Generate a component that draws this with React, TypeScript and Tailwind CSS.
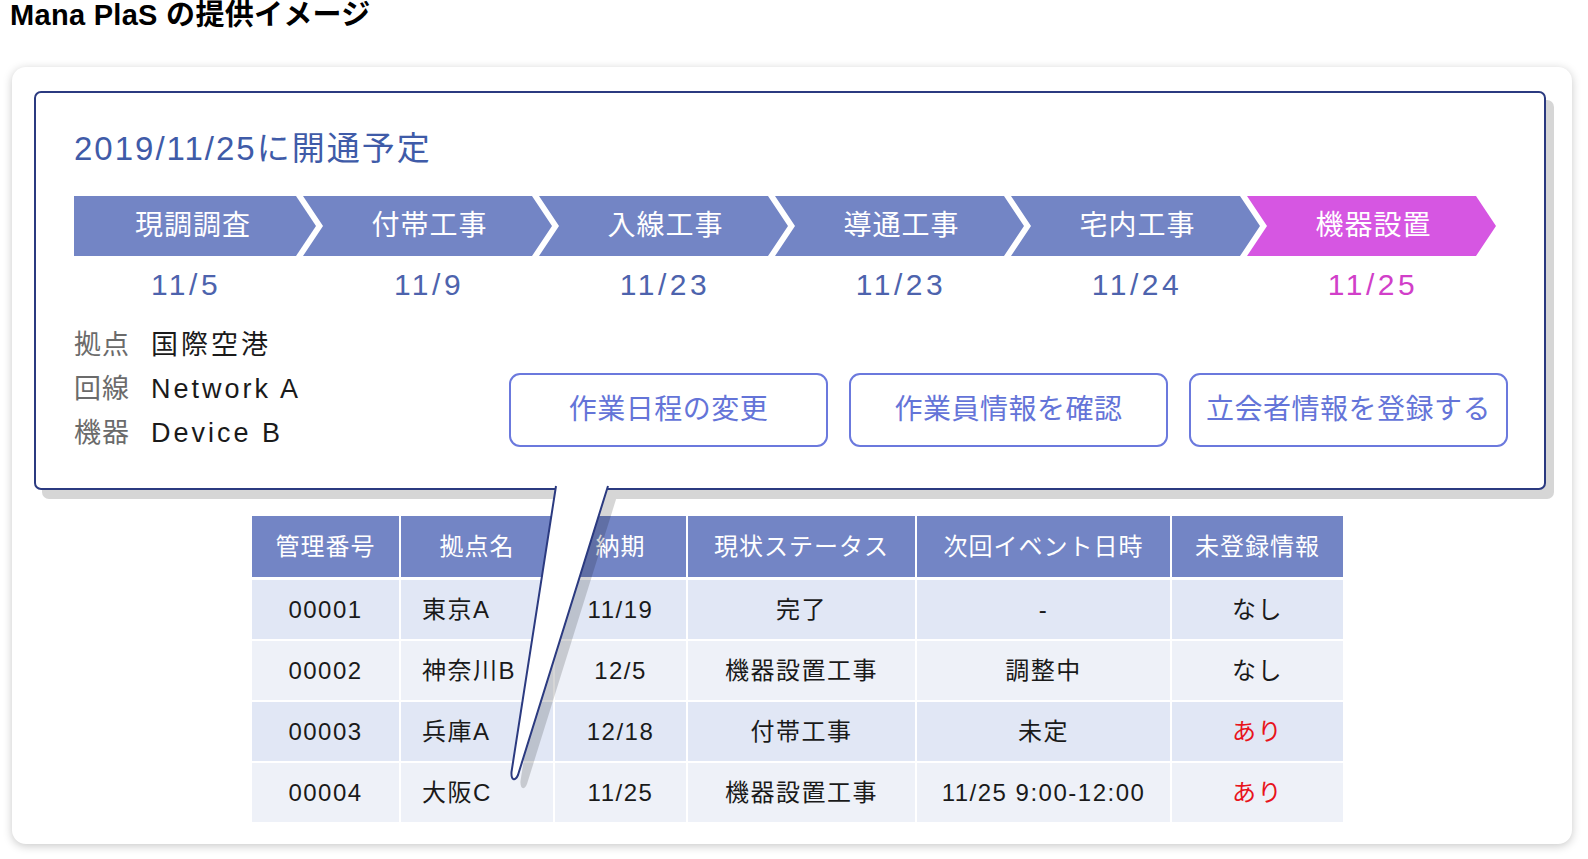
const steps = [
  { label: "現調調査", date: "11/5" },
  { label: "付帯工事", date: "11/9" },
  { label: "入線工事", date: "11/23" },
  { label: "導通工事", date: "11/23" },
  { label: "宅内工事", date: "11/24" },
  { label: "機器設置", date: "11/25", current: true },
];

const info = [
  ["拠点", "国際空港"],
  ["回線", "Network A"],
  ["機器", "Device B"],
];

const buttons = ["作業日程の変更", "作業員情報を確認", "立会者情報を登録する"];

const headers = ["管理番号", "拠点名", "納期", "現状ステータス", "次回イベント日時", "未登録情報"];

const rows = [
  ["00001", "東京A", "11/19", "完了", "-", "なし"],
  ["00002", "神奈川B", "12/5", "機器設置工事", "調整中", "なし"],
  ["00003", "兵庫A", "12/18", "付帯工事", "未定", "あり"],
  ["00004", "大阪C", "11/25", "機器設置工事", "11/25 9:00-12:00", "あり"],
];

const firstClip = "[clip-path:polygon(0_0,calc(100%_-_20px)_0,100%_50%,calc(100%_-_20px)_100%,0_100%)]";
const clip = "[clip-path:polygon(0_0,calc(100%_-_20px)_0,100%_50%,calc(100%_-_20px)_100%,0_100%,20px_50%)]";
const cols = "grid grid-cols-[147px_152px_131px_227px_253px_171px] gap-x-[2px]";

function StepBar() {
  return (
    <div className="mt-[27px] flex">
      {steps.map((s, i) => (
        <div key={s.label} className={i === 0 ? "w-[242px]" : "w-[249px] -ml-[13px]"}>
          <div
            className={`flex h-[60px] items-center justify-center text-[28px] tracking-[1px] text-white ${
              s.current ? "bg-[#d656e2]" : "bg-[#7385c5]"
            } ${i === 0 ? `${firstClip} pr-[4px]` : `${clip} pl-[4px]`}`}
          >
            {s.label}
          </div>
          <div
            className={`mt-[9px] h-[40px] text-center text-[30px] leading-[40px] tracking-[3.5px] ${
              s.current ? "text-[#d13fc9]" : "text-[#4d63ad]"
            } ${i === 0 ? "pr-[18px]" : "pl-[3px]"}`}
          >
            {s.date}
          </div>
        </div>
      ))}
    </div>
  );
}

function Tail() {
  return (
    <svg className="absolute left-[488px] top-[413px] overflow-visible" width="140" height="320" viewBox="0 0 140 320">
      <path
        d="M55.5 10 L107.1 10 L18 295 C15 302 11 300 11.5 292 Z"
        transform="translate(9 9)"
        fill="rgba(0,0,0,0.16)"
      />
      <path d="M56.2 5 L108.3 5 L18 295 C15 302 11 300 11.5 292 Z" fill="#ffffff" />
      <path
        d="M56 6 L11.5 292 C11 300 15 302 18 295 L108 6"
        fill="none"
        stroke="#2b3a80"
        strokeWidth="2"
        strokeLinejoin="round"
      />
    </svg>
  );
}

export default function App() {
  return (
    <div className="min-h-screen bg-white pl-[10px] font-['Liberation_Sans','Noto_Sans_CJK_JP',sans-serif] text-[#1a1a1a]">
      <h1 className="h-[30px] text-[29px] font-bold leading-[30px] tracking-[0.3px] text-black">
        Mana PlaS の提供イメージ
      </h1>

      <div className="relative ml-[2px] mt-[37px] w-[1560px] rounded-[14px] bg-white pb-[22px] pl-[22px] pr-[26px] pt-[24px] shadow-[0_2px_10px_rgba(0,0,0,0.22)]">
        {/* callout */}
        <div className="w-[1512px] rounded-[7px] border-2 border-[#2b3a80] bg-white pb-[33px] pl-[38px] pr-[36px] pt-[36px] shadow-[8px_9px_0_#d6d6d6]">
          <div className="h-[40px] text-[33px] leading-[40px] tracking-[2px] text-[#3f5ba8]">2019/11/25に開通予定</div>

          <StepBar />

          <div className="mt-[18px] flex">
            <div className="flex flex-col">
              {info.map(([k, v]) => (
                <div key={k} className="flex h-[44px] items-center text-[27px]">
                  <span className="w-[77px] tracking-[1px] text-[#6b6b6b]">{k}</span>
                  <span className="tracking-[3px] text-[#1a1a1a]">{v}</span>
                </div>
              ))}
            </div>
            <div className="ml-auto mt-[50px] flex gap-[21px] self-start">
              {buttons.map((b) => (
                <div
                  key={b}
                  className="flex h-[74px] w-[319px] items-center justify-center rounded-[11px] border-2 border-[#6b79dd] text-[28px] tracking-[0.5px] text-[#6474d8]"
                >
                  {b}
                </div>
              ))}
            </div>
          </div>
        </div>

        {/* table */}
        <div className="ml-[218px] mt-[26px] w-[1091px]">
          <div className={cols}>
            {headers.map((h) => (
              <div key={h} className="flex h-[61px] items-center justify-center bg-[#7385c5] text-[24px] tracking-[1px] text-white">
                {h}
              </div>
            ))}
          </div>
          {rows.map((r, ri) => (
            <div key={r[0]} className={`${cols} ${ri === 0 ? "mt-[3px]" : "mt-[2px]"}`}>
              {r.map((c, ci) => (
                <div
                  key={ci}
                  className={`flex h-[59px] items-center text-[24px] tracking-[1.5px] ${
                    ri % 2 === 0 ? "bg-[#e1e7f5]" : "bg-[#eef1f8]"
                  } ${ci === 1 ? "justify-start pl-[21px]" : "justify-center"} ${
                    c === "あり" ? "text-[#e8141c]" : "text-[#1a1a1a]"
                  }`}
                >
                  {c}
                </div>
              ))}
            </div>
          ))}
        </div>

        <Tail />
      </div>
    </div>
  );
}
